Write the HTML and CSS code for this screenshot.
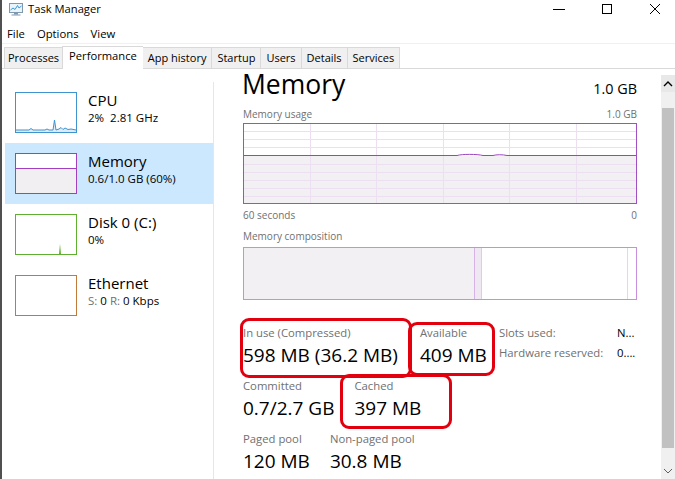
FILE: index.html
```html
<!DOCTYPE html>
<html>
<head>
<meta charset="utf-8">
<title>Task Manager</title>
<link rel="stylesheet" href="styles.css">
</head>
<body>
<div class="window">
  <header class="titlebar">
    <svg class="app-icon" viewBox="0 0 16 14">
      <rect x="1.5" y="1.5" width="13" height="9" fill="#eaf4fb" stroke="#7f98ad"/>
      <polyline points="2.5,8 5,6 7,7.5 9.5,3.5 11,6 13.5,4" fill="none" stroke="#3a9ad9" stroke-width="1"/>
      <rect x="6" y="11" width="4" height="1.5" fill="#7f98ad"/>
      <rect x="3.5" y="12.5" width="9" height="1" fill="#7f98ad"/>
    </svg>
    <span class="title">Task Manager</span>
    <div class="controls">
      <svg viewBox="0 0 12 12"><line x1="0" y1="6.5" x2="12" y2="6.5" stroke="#000" stroke-width="1"/></svg>
      <svg viewBox="0 0 12 12"><rect x="1.5" y="1.5" width="9" height="9" fill="none" stroke="#000" stroke-width="1"/></svg>
      <svg viewBox="0 0 12 12"><path d="M1 1 L11 11 M11 1 L1 11" stroke="#000" stroke-width="1"/></svg>
    </div>
  </header>

  <nav class="menubar">
    <span>File</span>
    <span>Options</span>
    <span>View</span>
  </nav>

  <div class="tabs">
    <span class="tab first">Processes</span>
    <span class="tab active">Performance</span>
    <span class="tab">App history</span>
    <span class="tab">Startup</span>
    <span class="tab">Users</span>
    <span class="tab">Details</span>
    <span class="tab last">Services</span>
  </div>

  <main class="content">
    <aside class="sidebar">
      <div class="list">
        <div class="item">
          <svg class="thumb cpu" viewBox="0 0 62 41">
            <path d="M1 40 L1 38 L14 38 L16 36.5 L18 38 L30 38 L32 37 L34 38 L38 38 L39.5 28 L41 38 L44 37 L46 35.5 L48 37.5 L50 36 L53 37.5 L56 37 L61 38 L61 40 Z" fill="#dcebf7"/>
            <polyline points="1,38 14,38 16,36.5 18,38 30,38 32,37 34,38 38,38 39.5,28 41,38 44,37 46,35.5 48,37.5 50,36 53,37.5 56,37 61,38" fill="none" stroke="#3d94cf" stroke-width="1"/>
            <rect x="0.5" y="0.5" width="61" height="40" fill="none" stroke="#3d94cf"/>
          </svg>
          <div class="item-text">
            <div class="item-name">CPU</div>
            <div class="item-sub">2%&nbsp; 2.81 GHz</div>
          </div>
        </div>
        <div class="item selected">
          <svg class="thumb" viewBox="0 0 62 41">
            <rect x="0" y="0" width="62" height="41" fill="#fff"/>
            <rect x="1" y="16" width="60" height="24" fill="#f1eff2"/>
            <line x1="1" y1="15.5" x2="61" y2="15.5" stroke="#a040c0"/>
            <rect x="0.5" y="0.5" width="61" height="40" fill="none" stroke="#a040c0"/>
          </svg>
          <div class="item-text">
            <div class="item-name">Memory</div>
            <div class="item-sub">0.6/1.0 GB (60%)</div>
          </div>
        </div>
        <div class="item">
          <svg class="thumb" viewBox="0 0 62 41">
            <path d="M44 40 L45 30 L46 40 Z" fill="#5fb030"/>
            <rect x="0.5" y="0.5" width="61" height="40" fill="none" stroke="#5fb030"/>
          </svg>
          <div class="item-text">
            <div class="item-name">Disk 0 (C:)</div>
            <div class="item-sub">0%</div>
          </div>
        </div>
        <div class="item">
          <svg class="thumb" viewBox="0 0 62 41">
            <rect x="0.5" y="0.5" width="61" height="40" fill="none" stroke="#c07a3a"/>
          </svg>
          <div class="item-text">
            <div class="item-name">Ethernet</div>
            <div class="item-sub"><span class="muted">S:</span> 0 <span class="muted">R:</span> 0 Kbps</div>
          </div>
        </div>
      </div>
    </aside>

    <section class="panel">
      <div class="panel-header">
        <h1 class="panel-title">Memory</h1>
        <span class="panel-total">1.0 GB</span>
      </div>

      <div class="axis-row top">
        <span>Memory usage</span>
        <span>1.0 GB</span>
      </div>
      <svg class="graph" viewBox="0 0 394 81">
        <rect x="0" y="33" width="394" height="48" fill="#f3f0f4"/>
        <g stroke="#ecdff1" stroke-width="1">
          <line x1="0" y1="8.5" x2="394" y2="8.5"/>
          <line x1="0" y1="16.5" x2="394" y2="16.5"/>
          <line x1="0" y1="24.5" x2="394" y2="24.5"/>
          <line x1="0" y1="41.5" x2="394" y2="41.5"/>
          <line x1="0" y1="49.5" x2="394" y2="49.5"/>
          <line x1="0" y1="57.5" x2="394" y2="57.5"/>
          <line x1="0" y1="65.5" x2="394" y2="65.5"/>
          <line x1="0" y1="73.5" x2="394" y2="73.5"/>
          <line x1="67.5" y1="0" x2="67.5" y2="81"/>
          <line x1="133.5" y1="0" x2="133.5" y2="81"/>
          <line x1="200.5" y1="0" x2="200.5" y2="81"/>
          <line x1="266.5" y1="0" x2="266.5" y2="81"/>
          <line x1="333.5" y1="0" x2="333.5" y2="81"/>
        </g>
        <path d="M0 32.5 L214 32.5 C219 31, 234 31, 240 32.5 L250 32.5 C253 31.5, 260 31.5, 264 32.5 L394 32.5" fill="none" stroke="#9b45bd" stroke-width="1"/>
        <rect x="0.5" y="0.5" width="393" height="80" fill="none" stroke="#a24fc4" stroke-width="1"/>
      </svg>
      <div class="axis-row">
        <span>60 seconds</span>
        <span>0</span>
      </div>

      <div class="axis-row comp-label">
        <span>Memory composition</span>
      </div>
      <div class="composition">
        <div class="seg in-use"></div>
        <div class="seg modified"></div>
        <div class="seg standby"></div>
        <div class="seg free"></div>
      </div>

      <div class="stats">
        <div class="stats-main">
          <div class="stat-row">
            <div class="stat mark mark-inuse">
              <div class="stat-label">In use (Compressed)</div>
              <div class="stat-value">598 MB (36.2 MB)</div>
            </div>
            <div class="stat mark mark-avail">
              <div class="stat-label">Available</div>
              <div class="stat-value">409 MB</div>
            </div>
          </div>
          <div class="stat-row">
            <div class="stat">
              <div class="stat-label">Committed</div>
              <div class="stat-value">0.7/2.7 GB</div>
            </div>
            <div class="stat mark mark-cached">
              <div class="stat-label">Cached</div>
              <div class="stat-value">397 MB</div>
            </div>
          </div>
          <div class="stat-row">
            <div class="stat">
              <div class="stat-label">Paged pool</div>
              <div class="stat-value">120 MB</div>
            </div>
            <div class="stat">
              <div class="stat-label">Non-paged pool</div>
              <div class="stat-value">30.8 MB</div>
            </div>
          </div>
        </div>
        <dl class="side-info">
          <div class="side-row"><dt>Slots used:</dt><dd>N...</dd></div>
          <div class="side-row"><dt>Hardware reserved:</dt><dd>0....</dd></div>
        </dl>
      </div>
    </section>

    <div class="scrollbar">
      <div class="sb-btn">
        <svg viewBox="0 0 12 8"><polyline points="2,6 6,2 10,6" fill="none" stroke="#000" stroke-width="1.4"/></svg>
      </div>
      <div class="sb-track"><div class="sb-thumb"></div></div>
      <div class="sb-btn down">
        <svg viewBox="0 0 12 8"><polyline points="2,2 6,6 10,2" fill="none" stroke="#606060" stroke-width="1"/></svg>
      </div>
    </div>
  </main>
</div>
</body>
</html>
```

FILE: styles.css
```css
* {
  box-sizing: border-box;
  margin: 0;
  padding: 0;
}

html,
body {
  width: 675px;
  height: 479px;
  overflow: hidden;
}

body {
  background: #fff;
  color: #000;
  font-family: "Open Sans", "Noto Sans", sans-serif;
  font-size: 11.3px;
}

.window {
  height: 479px;
  display: flex;
  flex-direction: column;
  border-left: 2px solid #505050;
}

/* title bar */
.titlebar {
  height: 24px;
  display: flex;
  align-items: flex-start;
  padding: 1px 0 0 6px;
}

.app-icon {
  width: 16px;
  height: 14px;
  margin-top: 1px;
  display: block;
}

.title {
  margin-left: 4px;
  line-height: 16px;
  font-size: 11.2px;
}

.controls {
  margin-left: auto;
  display: flex;
  gap: 36px;
  padding: 2px 14px 0 0;
}

.controls svg {
  width: 12px;
  height: 12px;
  display: block;
}

/* menu */
.menubar {
  height: 20px;
  display: flex;
  gap: 12px;
  padding-left: 5px;
  line-height: 19px;
  border-bottom: 1px solid #f0f0f0;
}

/* tabs */
.tabs {
  height: 25px;
  display: flex;
  align-items: flex-start;
  padding: 3px 0 0 2px;
  border-bottom: 1px solid #d9d9d9;
}

.tab {
  height: 21px;
  padding: 1px 5px 0;
  line-height: 18px;
  background: #f0f0f0;
  border: 1px solid #d9d9d9;
  border-right: none;
  border-bottom: none;
  font-size: 11px;
}

.tab.first {
  padding: 1px 3px 0;
}

.tab.last {
  border-right: 1px solid #d9d9d9;
}

.tab.active {
  height: 23px;
  margin-top: -1px;
  padding: 0 6px;
  background: #fff;
  font-size: 11.2px;
  position: relative;
}

.tab.active + .tab {
  border-left: none;
}

/* body */
.content {
  flex: 1;
  min-height: 0;
  display: flex;
}

.sidebar {
  width: 212px;
  padding: 13px 0 0 3px;
}

.list {
  height: 100%;
  border-right: 1px solid #e6e6e6;
}

.item {
  height: 61px;
  display: flex;
  align-items: flex-start;
  gap: 11px;
  padding: 10px 0 0 10px;
}

.item.selected {
  background: #cce8ff;
}

.thumb {
  width: 62px;
  height: 41px;
  display: block;
  flex: none;
}

.item-text {
  margin-top: -1px;
}

.item-name {
  font-size: 15px;
  line-height: 18px;
}

.item-sub {
  font-size: 11.5px;
  line-height: 18px;
}

.muted {
  color: #707070;
}

/* main panel */
.panel {
  flex: 1;
  min-width: 0;
  padding: 0 24px 0 28px;
}

.panel-header {
  height: 31px;
  display: flex;
  justify-content: space-between;
  align-items: baseline;
}

.panel-title {
  font-size: 26.5px;
  font-weight: 400;
  line-height: 31px;
}

.panel-total {
  font-size: 14.4px;
}

.axis-row {
  display: flex;
  justify-content: space-between;
  font-size: 10px;
  line-height: 14px;
  color: #707070;
  margin-top: 4px;
  padding-left: 1px;
}

.axis-row.top {
  margin-top: 7px;
  margin-bottom: 2px;
}

.axis-row.comp-label {
  margin-top: 7px;
  margin-bottom: 4px;
}

.graph {
  width: 394px;
  height: 81px;
  display: block;
  margin-left: 1px;
}

.composition {
  height: 53px;
  display: flex;
  margin-left: 1px;
  border: 1px solid #c98fdc;
}

.seg.in-use {
  width: 230px;
  background: #f3f0f4;
}

.seg.modified {
  width: 8px;
  background: #efe8f2;
  border-left: 1px solid #d7b2e5;
  border-right: 1px solid #e2c9ec;
}

.seg.standby {
  flex: 1;
  background: #fff;
}

.seg.free {
  width: 9px;
  border-left: 1px solid #ead3f2;
}

/* statistics */
.stats {
  display: flex;
  margin-top: 25px;
  padding-left: 1px;
}

.stats-main {
  width: 256px;
  flex: none;
}

.stat-row {
  display: flex;
  gap: 20px;
  margin-bottom: 9px;
}

.stat-row:first-child {
  gap: 22px;
}

.stat {
  position: relative;
}

.stat-label {
  font-size: 11.3px;
  line-height: 16px;
  color: #707070;
}

.stat-value {
  font-size: 19px;
  line-height: 28px;
  white-space: nowrap;
}

.mark::after {
  content: "";
  position: absolute;
  border: 3px solid #e3000e;
  border-radius: 9px;
}

.mark-inuse::after {
  left: -3px;
  top: -7px;
  width: 166px;
  height: 54px;
}

.mark-avail::after {
  left: -12px;
  top: -3px;
  width: 81px;
  height: 48px;
}

.mark-cached::after {
  left: -14px;
  top: -4px;
  width: 106px;
  height: 49px;
}

.side-info {
  margin-top: -2px;
}

.side-row {
  display: flex;
  line-height: 20px;
}

.side-row dt {
  width: 118px;
  color: #707070;
}

.side-row dd {
  color: #000;
}

/* scrollbar */
.scrollbar {
  width: 14px;
  flex: none;
  margin-top: 6px;
  display: flex;
  flex-direction: column;
  background: #f0f0f0;
}

.sb-btn {
  height: 17px;
  display: flex;
  align-items: center;
  justify-content: center;
  background: #e8e8e8;
}

.sb-btn.down {
  background: #f0f0f0;
}

.sb-btn svg {
  width: 12px;
  height: 8px;
  display: block;
}

.sb-track {
  flex: 1;
  padding: 16px 1px 14px 1px;
  display: flex;
}

.sb-thumb {
  flex: 1;
  background: #c1c1c1;
}
```
